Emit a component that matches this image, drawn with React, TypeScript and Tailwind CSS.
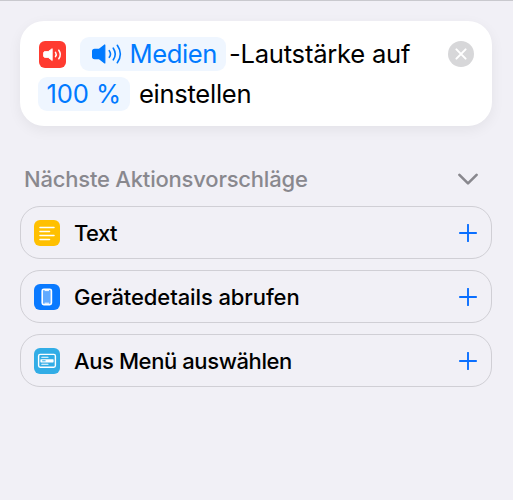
import type { ReactNode } from "react";

type Suggestion = {
  label: string;
  color: string;
  tracking: string;
  icon: ReactNode;
};

const suggestions: Suggestion[] = [
  {
    label: "Text",
    color: "bg-[#ffc000]",
    tracking: "tracking-[-0.6px]",
    icon: (
      <path
        d="M6 7.4h14M6 11.4h9.5M6 15.4h14M6 19.4h9.5"
        stroke="white"
        strokeWidth="1.5"
        strokeLinecap="round"
      />
    ),
  },
  {
    label: "Gerätedetails abrufen",
    color: "bg-[#0a7aff]",
    tracking: "tracking-[-0.1px]",
    icon: (
      <>
        <rect x="8.2" y="5.2" width="9.2" height="15.4" rx="1.6" fill="#62aaff" stroke="white" strokeWidth="1.6" />
        <path d="M11 6.6h3.6M11 19.2h3.6" stroke="white" strokeWidth="1" strokeLinecap="round" />
      </>
    ),
  },
  {
    label: "Aus Menü auswählen",
    color: "bg-[#32ade6]",
    tracking: "tracking-[-0.4px]",
    icon: (
      <>
        <rect x="4.6" y="6.4" width="16.8" height="12.8" rx="1.6" stroke="white" strokeWidth="1.4" />
        <path d="M7.8 9.3h6.2M7.8 16.3h6.2" stroke="white" strokeWidth="1.1" strokeLinecap="round" />
        <rect x="6.4" y="11.2" width="13.2" height="3.2" rx="0.6" fill="white" />
        <path d="M8.2 12.8h3.4" stroke="#32ade6" strokeWidth="1" />
      </>
    ),
  },
];

function Speaker() {
  return (
    <svg className="h-[20px] w-[30px] shrink-0" viewBox="0 0 30 20" fill="none">
      <path
        d="M12.8 1v18L7 14.6H2.6C1.2 14.6.6 13.9.6 12.7V7.3C.6 6.1 1.2 5.4 2.6 5.4H7z"
        fill="currentColor"
        stroke="currentColor"
        strokeWidth="1.2"
        strokeLinejoin="round"
      />
      <path
        d="M17.3 6.7Q19.7 10 17.3 13.3M21.3 4.2Q25.2 10 21.3 15.8M25.3 1.3Q31.4 10 25.3 18.7"
        stroke="currentColor"
        strokeWidth="1.6"
        strokeLinecap="round"
      />
    </svg>
  );
}

export default function App() {
  return (
    <main className="h-[500px] w-[513px] overflow-hidden border-t border-[#c9c9ce] bg-[#f1f0f6] px-5 pt-5 font-['Inter','Liberation_Sans',sans-serif] text-black">
      {/* Aktion */}
      <section className="flex h-[105px] w-[472px] items-start justify-between rounded-[24px] bg-white pt-4 pr-[18px] pl-[18px] shadow-[0_4px_14px_rgba(0,0,0,0.06)]">
        <div className="text-[25.6px] leading-[34px] whitespace-nowrap">
          <div className="flex h-[34px] items-center">
            <span className="mr-[14px] ml-px flex size-[27px] shrink-0 items-center justify-center rounded-[6px] bg-[#ff3b30]">
              <svg className="size-[27px]" viewBox="0 0 27 27" fill="none">
                <path
                  d="M13.2 7.7v11.8L9.2 16.4H6.1C5.1 16.4 4.6 15.9 4.6 15v-3c0-.9.5-1.4 1.5-1.4h3.1z"
                  fill="white"
                  stroke="white"
                  strokeWidth="0.9"
                  strokeLinejoin="round"
                />
                <path d="M16.5 11.3Q18 13.5 16.5 15.7M19.8 9.2Q22.8 13.5 19.8 17.8" stroke="white" strokeWidth="1.5" strokeLinecap="round" />
              </svg>
            </span>
            <span className="flex h-[34px] w-[146px] items-center rounded-[9px] bg-[#eff6ff] pl-[12px] text-[#007aff]">
              <Speaker />
              <span className="ml-[7.5px] tracking-[-0.4px]">Medien</span>
            </span>
            <span className="ml-[3px] tracking-[-0.25px]">-Lautstärke auf</span>
          </div>
          <div className="mt-[6px] flex h-[34px] items-center">
            <span className="h-[34px] w-[92px] rounded-[9px] bg-[#eff6ff] pl-[8.5px] tracking-[-0.1px] text-[#007aff]">
              100 %
            </span>
            <span className="ml-[9px] tracking-[-0.3px]">einstellen</span>
          </div>
        </div>
        <button aria-label="Entfernen" className="mt-1 size-[26px]">
          <svg viewBox="0 0 26 26" fill="none">
            <circle cx="13" cy="13" r="13" fill="#d7d7d9" />
            <path d="m8.4 8.4 9.2 9.2m0-9.2-9.2 9.2" stroke="white" strokeWidth="2" strokeLinecap="round" />
          </svg>
        </button>
      </section>

      {/* Vorschläge */}
      <div className="mt-[38px] flex h-[30px] items-center justify-between pr-[14px] pl-[4px] text-[#89888e]">
        <h2 className="text-[22px] font-medium tracking-[-0.2px] whitespace-nowrap">Nächste Aktionsvorschläge</h2>
        <svg className="h-3 w-[22px]" viewBox="0 0 22 12" fill="none">
          <path d="m2.4 1.8 8.6 8.6 8.6-8.6" stroke="currentColor" strokeWidth="2.6" strokeLinecap="round" strokeLinejoin="round" />
        </svg>
      </div>

      <div className="mt-3 flex w-[472px] flex-col gap-[11px]">
        {suggestions.map((item) => (
          <button
            key={item.label}
            className="flex h-[53px] items-center rounded-[20px] border border-[#d0cfd5] pr-[14px] pl-[13px] text-left"
          >
            <span className={`flex size-[26px] shrink-0 items-center justify-center rounded-[6px] ${item.color}`}>
              <svg className="size-[26px]" viewBox="0 0 26 26" fill="none">
                {item.icon}
              </svg>
            </span>
            <span className={`mt-px ml-[14px] flex-1 text-[22px] font-medium whitespace-nowrap ${item.tracking}`}>{item.label}</span>
            <svg className="size-[18px]" viewBox="0 0 18 18" fill="none">
              <path d="M9 .8v16.4M.8 9h16.4" stroke="#0a6fff" strokeWidth="1.9" strokeLinecap="round" />
            </svg>
          </button>
        ))}
      </div>
    </main>
  );
}
